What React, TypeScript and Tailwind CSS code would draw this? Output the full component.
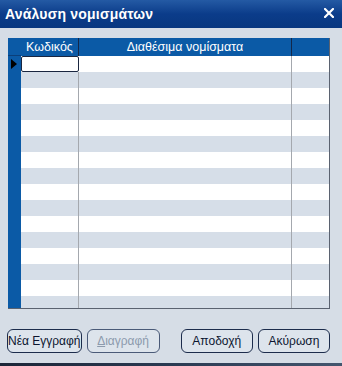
import React from 'react';

const ROWS = 16;

const Button: React.FC<{ label: React.ReactNode; disabled?: boolean; className?: string }> = ({
  label,
  disabled = false,
  className = '',
}) => (
  <button
    type="button"
    disabled={disabled}
    className={`h-[24px] whitespace-nowrap rounded-[6px] border bg-[#dde4ec] text-[12px] leading-none ${
      disabled ? 'border-[#4a5a78] text-[#8c9aac]' : 'border-[#1c2c4c] text-[#0c1630]'
    } ${className}`}
  >
    {label}
  </button>
);

export default function App() {
  return (
    <div
      className="flex h-[366px] w-[342px] flex-col overflow-hidden bg-[#d6dde6]"
      style={{ fontFamily: '"Liberation Sans", Arial, sans-serif' }}
    >
      {/* title bar */}
      <div className="flex h-[28px] shrink-0 items-center justify-between bg-gradient-to-b from-[#245aa4] via-[#0b3c8a] to-[#093780] pl-[5px] pr-[8px]">
        <span className="text-[14px] font-bold tracking-[0.2px] text-white">Ανάλυση νομισμάτων</span>
        <svg width="10" height="10" viewBox="0 0 10 10" className="mb-[2px]">
          <path d="M1 1 L9 9 M9 1 L1 9" stroke="white" strokeWidth="2.2" strokeLinecap="square" />
        </svg>
      </div>

      <div className="flex flex-1 flex-col pl-[8px] pr-[12px] pt-[10px]">
        {/* grid */}
        <div className="flex h-[271px] border-b border-r border-[#5a6270] bg-white">
          <div className="flex w-[13px] shrink-0 flex-col bg-[#0b5aa6]">
            <div className="h-[18px] shrink-0 border-b border-[#0b3f7a]" />
            <div className="flex h-[16px] items-center pl-[3px]">
              <svg width="6" height="10" viewBox="0 0 6 10">
                <path d="M0 0 L6 5 L0 10 Z" fill="#000" />
              </svg>
            </div>
          </div>
          <div className="flex flex-1 flex-col overflow-hidden">
            <div className="flex h-[18px] shrink-0 bg-[#0b5aa6] text-[12.5px] text-white">
              <div className="flex w-[58px] items-center justify-center border-r border-[#13284a]">Κωδικός</div>
              <div className="flex w-[213px] items-center justify-center border-r border-[#13284a]">
                Διαθέσιμα νομίσματα
              </div>
              <div className="flex-1" />
            </div>
            {Array.from({ length: ROWS }).map((_, i) => (
              <div
                key={i}
                className={`flex h-[16px] shrink-0 ${i % 2 === 0 ? 'bg-white' : 'bg-[#d6dee8]'}`}
              >
                <div
                  className={`w-[58px] ${
                    i === 0 ? 'rounded-[2px] border border-[#1a2640]' : 'border-r border-[#a4a8ae]'
                  }`}
                />
                <div className="w-[213px] border-r border-[#a4a8ae]" />
                <div className="flex-1" />
              </div>
            ))}
          </div>
        </div>

        {/* buttons */}
        <div className="mt-[20px] flex items-center">
          <Button label="Νέα Εγγραφή" className="-ml-[1px] w-[75px]" />
          <Button
            label={
              <span>
                <span className="underline">Δ</span>ιαγραφή
              </span>
            }
            disabled
            className="ml-[5px] w-[75px]"
          />
          <Button label="Αποδοχή" className="ml-[21px] w-[74px]" />
          <Button label="Ακύρωση" className="ml-[5px] w-[74px]" />
        </div>
      </div>

      <div className="h-[3px] shrink-0 bg-gradient-to-r from-[#1c2638] via-[#2a3a52] to-[#44566e]" />
    </div>
  );
}
